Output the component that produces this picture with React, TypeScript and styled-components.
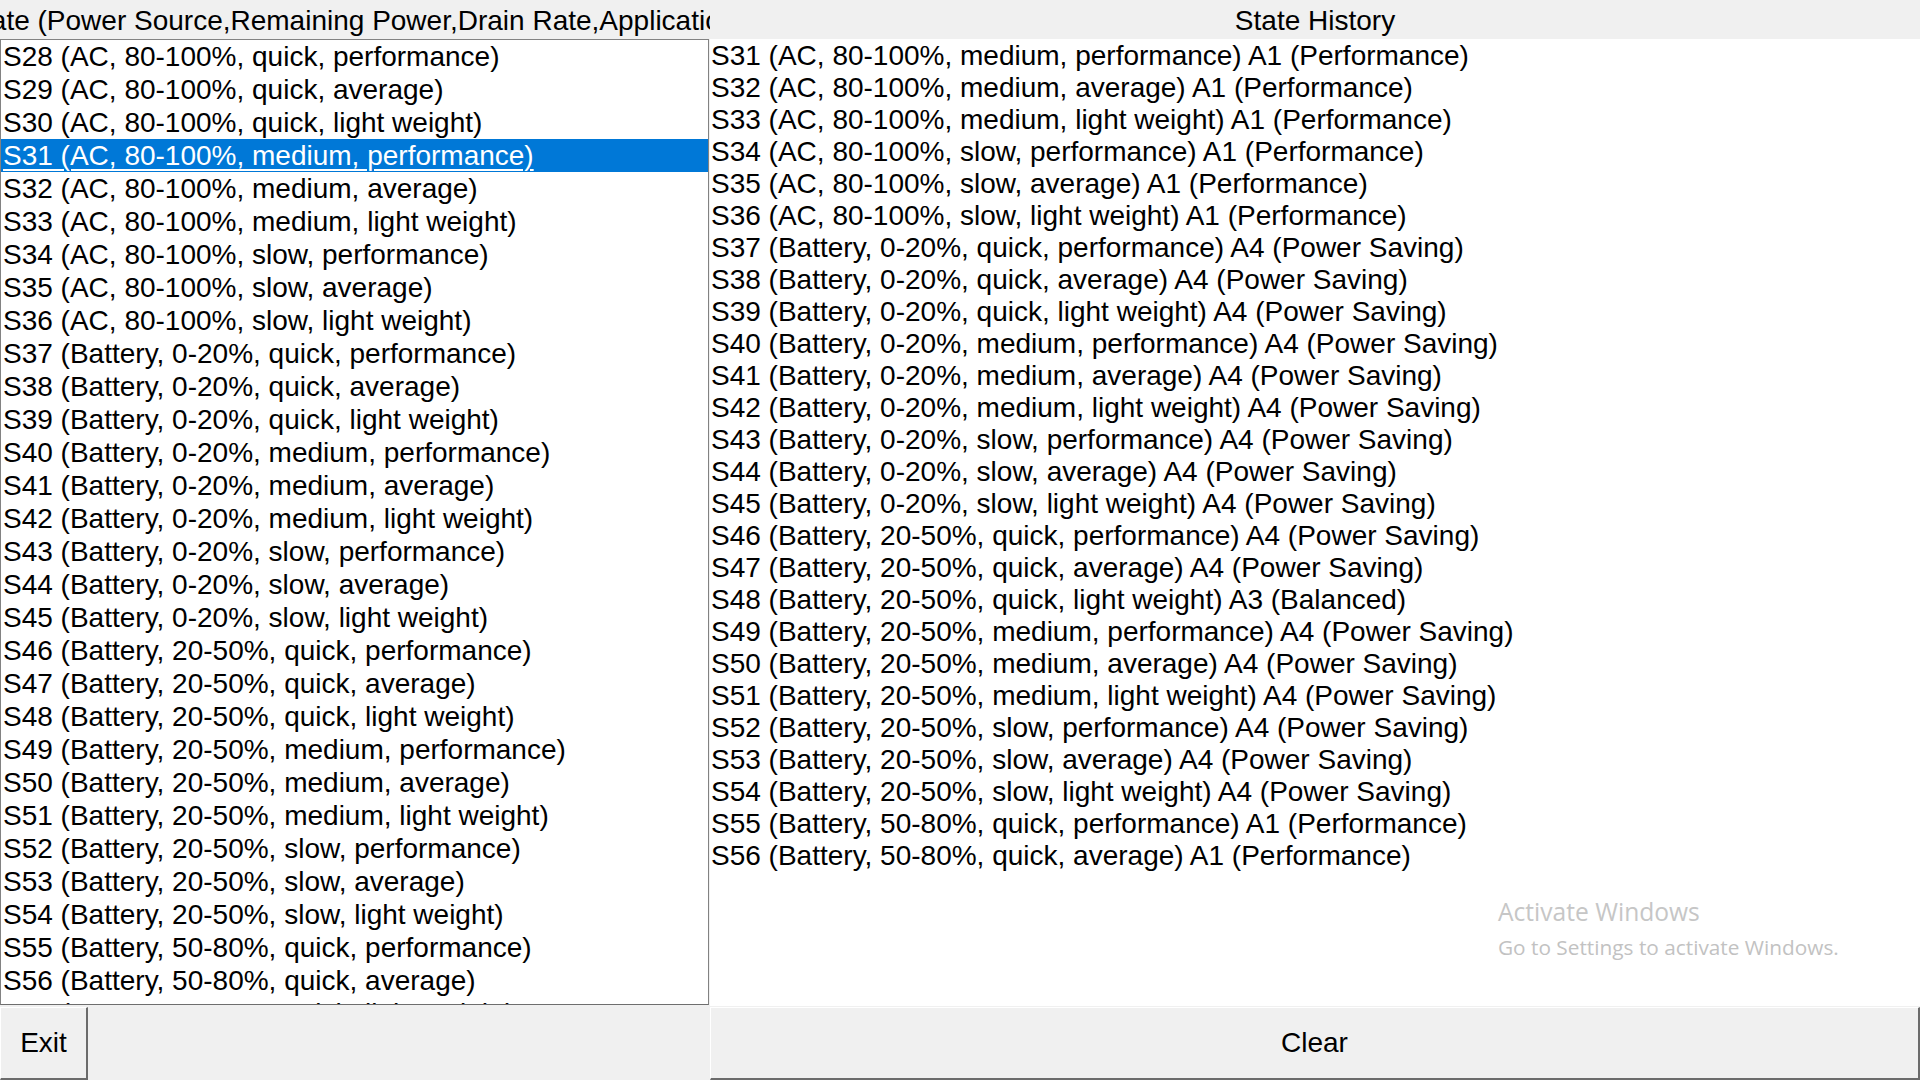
import styled, { createGlobalStyle } from 'styled-components';

const GROUPS = [
  ['AC', '80-100%'],
  ['Battery', '0-20%'],
  ['Battery', '20-50%'],
  ['Battery', '50-80%'],
];
const RATES = ['quick', 'medium', 'slow'];
const APPS = ['performance', 'average', 'light weight'];

// S28 is the first state of the AC 80-100% block
function stateLabel(n: number) {
  const idx = n - 28;
  const [source, power] = GROUPS[Math.floor(idx / 9)];
  const rate = RATES[Math.floor((idx % 9) / 3)];
  const app = APPS[idx % 3];
  return `S${n} (${source}, ${power}, ${rate}, ${app})`;
}

const states: number[] = [];
for (let n = 28; n <= 57; n++) states.push(n);

const SELECTED = 31;

function actionFor(n: number) {
  if (n <= 36 || n >= 55) return 'A1 (Performance)';
  if (n === 48) return 'A3 (Balanced)';
  return 'A4 (Power Saving)';
}

const history: number[] = [];
for (let n = 31; n <= 56; n++) history.push(n);

export default function App() {
  return (
    <>
      <GlobalStyle />
      <Window>
        <HeaderCell>
          <HeaderText>State (Power Source,Remaining Power,Drain Rate,Application)</HeaderText>
        </HeaderCell>
        <HeaderCell>
          <HeaderText>State History</HeaderText>
        </HeaderCell>

        <StateList>
          {states.map(n => (
            <StateRow key={n} $selected={n === SELECTED}>
              <span>{stateLabel(n)}</span>
            </StateRow>
          ))}
        </StateList>

        <HistoryList>
          {history.map(n => (
            <HistoryRow key={n}>
              {stateLabel(n)} {actionFor(n)}
            </HistoryRow>
          ))}
        </HistoryList>

        <ButtonCell>
          <ExitButton>Exit</ExitButton>
        </ButtonCell>
        <ButtonCell>
          <ClearButton>Clear</ClearButton>
        </ButtonCell>
      </Window>

      <Watermark>
        <WatermarkTitle>Activate Windows</WatermarkTitle>
        <WatermarkText>Go to Settings to activate Windows.</WatermarkText>
      </Watermark>
    </>
  );
}

const GlobalStyle = createGlobalStyle`
  html, body {
    margin: 0;
    padding: 0;
    background: #f0f0f0;
    overflow: hidden;
  }
  body {
    font-family: 'Liberation Sans', Arial, sans-serif;
    color: #000;
  }
`;

const Window = styled.div`
  width: 1920px;
  height: 1080px;
  display: grid;
  grid-template-columns: 710px 1210px;
  grid-template-rows: 39px 967px 74px;
  background: #f0f0f0;
`;

const HeaderCell = styled.div`
  display: flex;
  justify-content: center;
  align-items: center;
  overflow: hidden;
  white-space: nowrap;
`;

const HeaderText = styled.span`
  flex: none;
  font-size: 28px;
  line-height: 39px;
  padding-top: 1px;
`;

const StateList = styled.div`
  width: 709px;
  box-sizing: border-box;
  background: #fff;
  border: 1px solid #828282;
  border-bottom-color: #6e6e6e;
  height: 966px;
  overflow: hidden;
`;

interface RowProps {
  $selected?: boolean;
}

const StateRow = styled.div<RowProps>`
  height: 33px;
  line-height: 33px;
  font-size: 28px;
  padding-left: 2px;
  white-space: nowrap;
  background: ${p => (p.$selected ? '#0078d7' : 'transparent')};
  color: ${p => (p.$selected ? '#fff' : '#000')};

  span {
    text-decoration: ${p => (p.$selected ? 'underline' : 'none')};
    text-underline-offset: 4px;
    text-decoration-thickness: 2px;
  }
`;

const HistoryList = styled.div`
  background: #fff;
  overflow: hidden;
  padding-top: 1px;
`;

const HistoryRow = styled.div`
  height: 32px;
  line-height: 32px;
  font-size: 28px;
  padding-left: 1px;
  white-space: nowrap;
`;

const ButtonCell = styled.div`
  display: flex;
  align-items: stretch;
  padding-top: 1px;
`;

const BaseButton = styled.button`
  box-sizing: border-box;
  height: 100%;
  background: #f0f0f0;
  border-style: solid;
  border-width: 1px 2px 2px 1px;
  border-color: #ffffff #6b6b6b #6b6b6b #ffffff;
  font-family: 'Liberation Sans', Arial, sans-serif;
  font-size: 28px;
  color: #000;
  padding: 0;
  cursor: pointer;
`;

const ExitButton = styled(BaseButton)`
  width: 88px;
`;

const ClearButton = styled(BaseButton)`
  width: 100%;
`;

const Watermark = styled.div`
  position: absolute;
  left: 1498px;
  top: 895px;
  color: #c6c6c6;
  font-family: 'Open Sans', 'Noto Sans', sans-serif;
  pointer-events: none;
`;

const WatermarkTitle = styled.div`
  font-size: 24.6px;
  line-height: 34px;
`;

const WatermarkText = styled.div`
  font-size: 20.8px;
  line-height: 30px;
  margin-top: 3px;
  color: #c2c2c2;
`;
